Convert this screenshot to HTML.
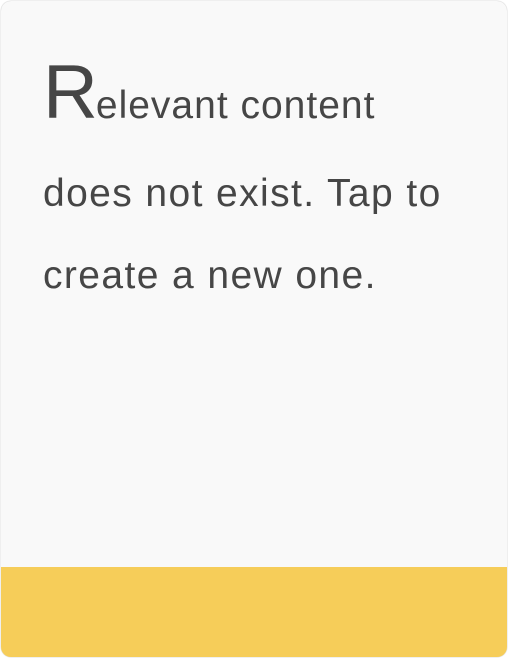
<!DOCTYPE html>
<html><head><meta charset="utf-8"><style>
html,body{margin:0;padding:0;background:#fff;}
.card{position:relative;width:506px;height:656px;margin:0 1px;border-radius:10px;background:#f9f9f9;overflow:hidden;box-shadow:0 0 1px #999;top:1px;}
.t{position:absolute;left:42px;font-family:"Liberation Sans",sans-serif;color:#464646;font-size:39px;white-space:nowrap;line-height:1;letter-spacing:1.4px;}
.big{font-size:76px;letter-spacing:-2px;}
.foot{position:absolute;left:0;right:0;top:566px;bottom:0;background:#f6cd59;}
</style></head><body>
<div class="card">
<div class="t" style="top:54px;letter-spacing:1px;"><span class="big">R</span>elevant content</div>
<div class="t" style="top:173px;">does not exist. Tap to</div>
<div class="t" style="top:255px;">create a new one.</div>
<div class="foot"></div>
</div>
</body></html>
